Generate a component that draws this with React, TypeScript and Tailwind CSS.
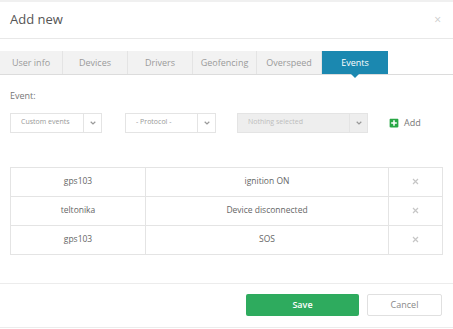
import { FaPlusSquare } from "react-icons/fa";

const tabs = [
  { label: "User info", w: "w-[63px]" },
  { label: "Devices", w: "w-[65px]" },
  { label: "Drivers", w: "w-[65px]" },
  { label: "Geofencing", w: "w-[64px]" },
  { label: "Overspeed", w: "w-[65px]" },
];

const rows = [
  ["gps103", "ignition ON"],
  ["teltonika", "Device disconnected"],
  ["gps103", "SOS"],
];

const Chevron = () => (
  <svg width="6" height="4" viewBox="0 0 6 4" className="text-[#999]">
    <path d="M0.7 0.8l2.3 2.2L5.3 0.8" fill="none" stroke="currentColor" strokeWidth="1.2" />
  </svg>
);

const Cross = () => (
  <svg width="7" height="7" viewBox="0 0 7 7" className="mx-auto text-[#c6c6c6]">
    <path d="M1 1l5 5M6 1l-5 5" stroke="currentColor" strokeWidth="1.2" />
  </svg>
);

const Select = ({
  text,
  w,
  disabled,
}: {
  text: string;
  w: string;
  disabled?: boolean;
}) => (
  <div
    className={`flex h-[20px] ${w} border border-[#e4e4e4] ${
      disabled ? "bg-[#eeeeee] text-[#bdbdbd]" : "bg-white text-[#999]"
    }`}
  >
    <span className="flex flex-1 items-center pl-[10px] text-[7px]">{text}</span>
    <span className="flex w-[18px] items-center justify-center border-l border-[#e4e4e4]">
      <Chevron />
    </span>
  </div>
);

export default function App() {
  return (
    <div className="h-[329px] w-[453px] overflow-hidden border-t-2 border-[#f0f0f0] bg-white font-['Open_Sans',sans-serif] text-[#666]">
      <div className="flex h-[37px] items-center justify-between border-b border-[#e8e8e8] px-[10px]">
        <span className="text-[13px] text-[#555]">Add new</span>
        <span className="pr-[2px] text-[12px] text-[#ccc]">×</span>
      </div>

      <div className="mt-[12px] flex h-[24px] border-b border-[#dcdcdc]">
        {tabs.map((t) => (
          <div
            key={t.label}
            className={`flex ${t.w} items-center justify-center border-r border-[#e4e4e4] bg-[#f2f2f2] text-[9px] text-[#9a9a9a]`}
          >
            {t.label}
          </div>
        ))}
        <div className="relative flex w-[66px] items-center justify-center bg-[#1b88b0] text-[9px] font-medium text-white">
          Events
          <span className="absolute -bottom-[4px] left-1/2 h-0 w-0 -translate-x-1/2 border-x-[4px] border-t-[4px] border-x-transparent border-t-[#1b88b0]" />
        </div>
      </div>

      <div className="px-[10px]">
        <div className="mt-[14px] text-[9px] text-[#777]">Event:</div>

        <div className="mt-[10px] flex items-center">
          <Select text="Custom events" w="w-[92px]" />
          <div className="ml-[23px]">
            <Select text="- Protocol -" w="w-[91px]" />
          </div>
          <div className="ml-[21px]">
            <Select text="Nothing selected" w="w-[131px]" disabled />
          </div>
          <div className="ml-[21px] flex items-center gap-[5px] text-[9px] text-[#777]">
            <FaPlusSquare className="text-[10px] text-[#28a745]" />
            Add
          </div>
        </div>

        <table className="mt-[34px] w-[433px] border-collapse text-[8.5px] text-[#666]">
          <tbody>
            {rows.map((r, i) => (
              <tr key={i} className="h-[29px]">
                <td className="w-[135px] border border-[#e4e4e4] text-center">{r[0]}</td>
                <td className="w-[243px] border border-[#e4e4e4] text-center">{r[1]}</td>
                <td className="border border-[#e4e4e4] text-center">
                  <Cross />
                </td>
              </tr>
            ))}
          </tbody>
        </table>
      </div>

      <div className="mt-[28px] flex h-[45px] items-center justify-end gap-[8px] border-y border-[#ececec] pr-[11px]">
        <button className="h-[22px] w-[113px] rounded-[2px] bg-[#2eab5e] text-[9px] font-semibold text-white">
          Save
        </button>
        <button className="h-[22px] w-[75px] rounded-[2px] border border-[#e0e0e0] bg-white text-[9px] text-[#888]">
          Cancel
        </button>
      </div>
    </div>
  );
}
